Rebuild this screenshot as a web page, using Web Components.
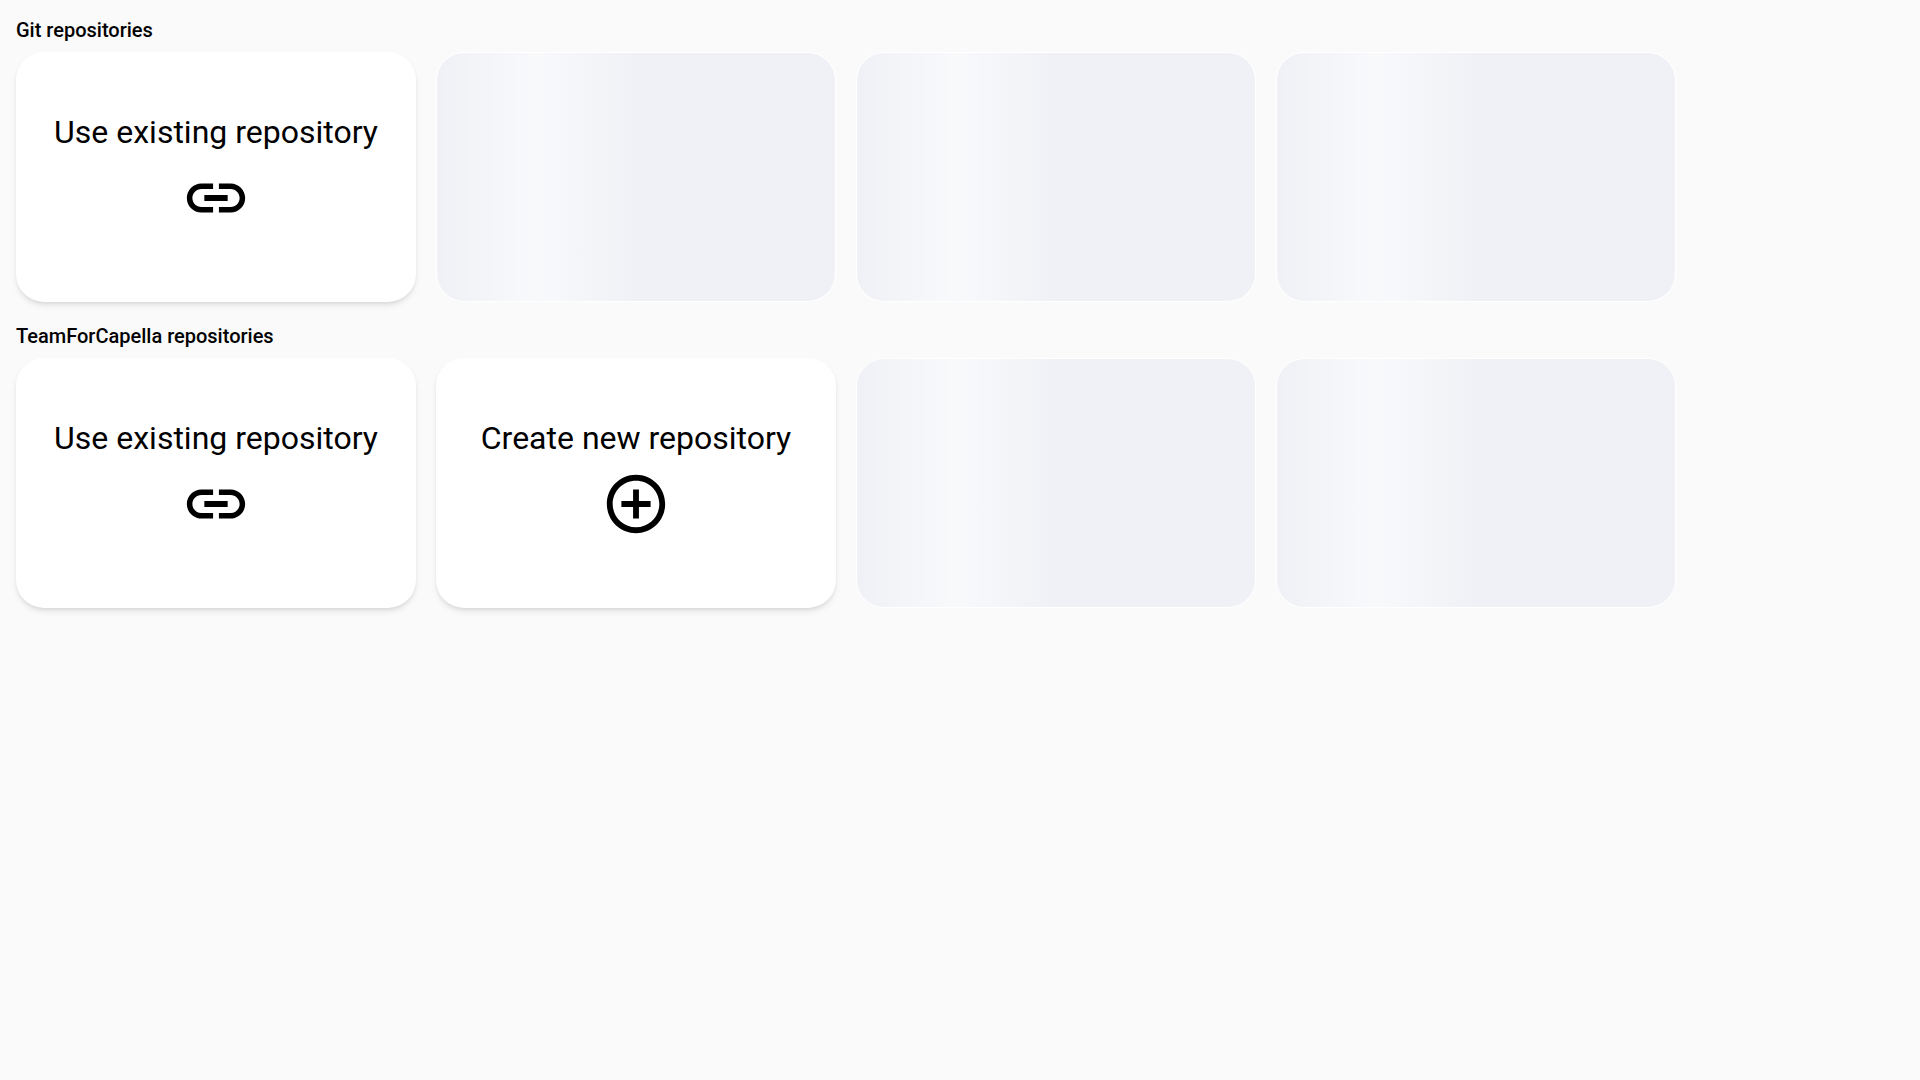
<!DOCTYPE html>
<html lang="en">
<head>
<meta charset="utf-8">
<title>Repositories</title>
<style>
  body { margin: 0; background: #fafafa; color: #000; font-family: Roboto, "Liberation Sans", sans-serif; }
</style>
</head>
<body>
<repository-overview>
  <repository-section heading="Git repositories">
    <repository-tile icon="link">Use existing repository</repository-tile>
    <skeleton-tile></skeleton-tile>
    <skeleton-tile></skeleton-tile>
    <skeleton-tile></skeleton-tile>
  </repository-section>
  <repository-section heading="TeamForCapella repositories">
    <repository-tile icon="link">Use existing repository</repository-tile>
    <repository-tile icon="add">Create new repository</repository-tile>
    <skeleton-tile></skeleton-tile>
    <skeleton-tile></skeleton-tile>
  </repository-section>
</repository-overview>

<script>
const define = (name, html, setup) => {
  const template = document.createElement('template');
  template.innerHTML = html;
  customElements.define(name, class extends HTMLElement {
    constructor() {
      super();
      this.attachShadow({ mode: 'open' }).append(template.content.cloneNode(true));
    }
    connectedCallback() {
      if (setup) setup(this, this.shadowRoot);
    }
  });
};

const icons = {
  link: 'M3.9 12c0-1.71 1.39-3.1 3.1-3.1h4V7H7c-2.76 0-5 2.24-5 5s2.24 5 5 5h4v-1.9H7c-1.71 0-3.1-1.39-3.1-3.1zM8 13h8v-2H8v2zm9-6h-4v1.9h4c1.71 0 3.1 1.39 3.1 3.1s-1.39 3.1-3.1 3.1h-4V17h4c2.76 0 5-2.24 5-5s-2.24-5-5-5z',
  add: 'M13 7h-2v4H7v2h4v4h2v-4h4v-2h-4V7zm-1-5C6.48 2 2 6.48 2 12s4.48 10 10 10 10-4.48 10-10S17.52 2 12 2zm0 18c-4.41 0-8-3.59-8-8s3.59-8 8-8 8 3.59 8 8-3.59 8-8 8z'
};

define('repository-overview', `
  <style>
    :host { display: block; padding: 16px; }
    main { display: flex; flex-direction: column; gap: 20px; }
  </style>
  <main><slot></slot></main>`);

define('repository-section', `
  <style>
    :host { display: block; }
    h2 { margin: 0 0 8px; font-size: 20px; font-weight: 500; line-height: 28px; }
    .tiles { display: flex; flex-wrap: wrap; gap: 20px; }
  </style>
  <section>
    <h2 id="heading"></h2>
    <div class="tiles"><slot></slot></div>
  </section>`, (host, root) => {
  root.querySelector('h2').textContent = host.getAttribute('heading');
});

define('repository-tile', `
  <style>
    :host { display: block; width: 400px; height: 250px; }
    button {
      box-sizing: border-box; width: 100%; height: 100%; margin: 0; padding: 60px 0 0;
      display: flex; flex-direction: column; align-items: center; justify-content: flex-start; gap: 11px;
      border: 0; border-radius: 28px; background: #fff; color: inherit; cursor: pointer;
      font: 400 32px/40px Roboto, "Liberation Sans", sans-serif;
      box-shadow: 0 4px 6px -1px rgb(0 0 0 / 10%), 0 2px 4px -2px rgb(0 0 0 / 10%);
    }
    svg { display: block; width: 70px; height: 70px; fill: currentColor; }
  </style>
  <button type="button">
    <span><slot></slot></span>
    <svg viewBox="0 0 24 24" aria-hidden="true"><path/></svg>
  </button>`, (host, root) => {
  root.querySelector('path').setAttribute('d', icons[host.getAttribute('icon')]);
});

define('skeleton-tile', `
  <style>
    :host {
      display: block; box-sizing: border-box; width: 400px; height: 250px;
      border: 1px solid #fff; border-radius: 28px; overflow: hidden;
      background: linear-gradient(90deg, rgb(255 255 255 / 0%), rgb(255 255 255 / 60%), rgb(255 255 255 / 0%)) 0 0 / 200px 100% no-repeat padding-box, #eff1f6 padding-box;
    }
  </style>
  <div role="progressbar" aria-label="Loading"></div>`);
</script>
</body>
</html>
